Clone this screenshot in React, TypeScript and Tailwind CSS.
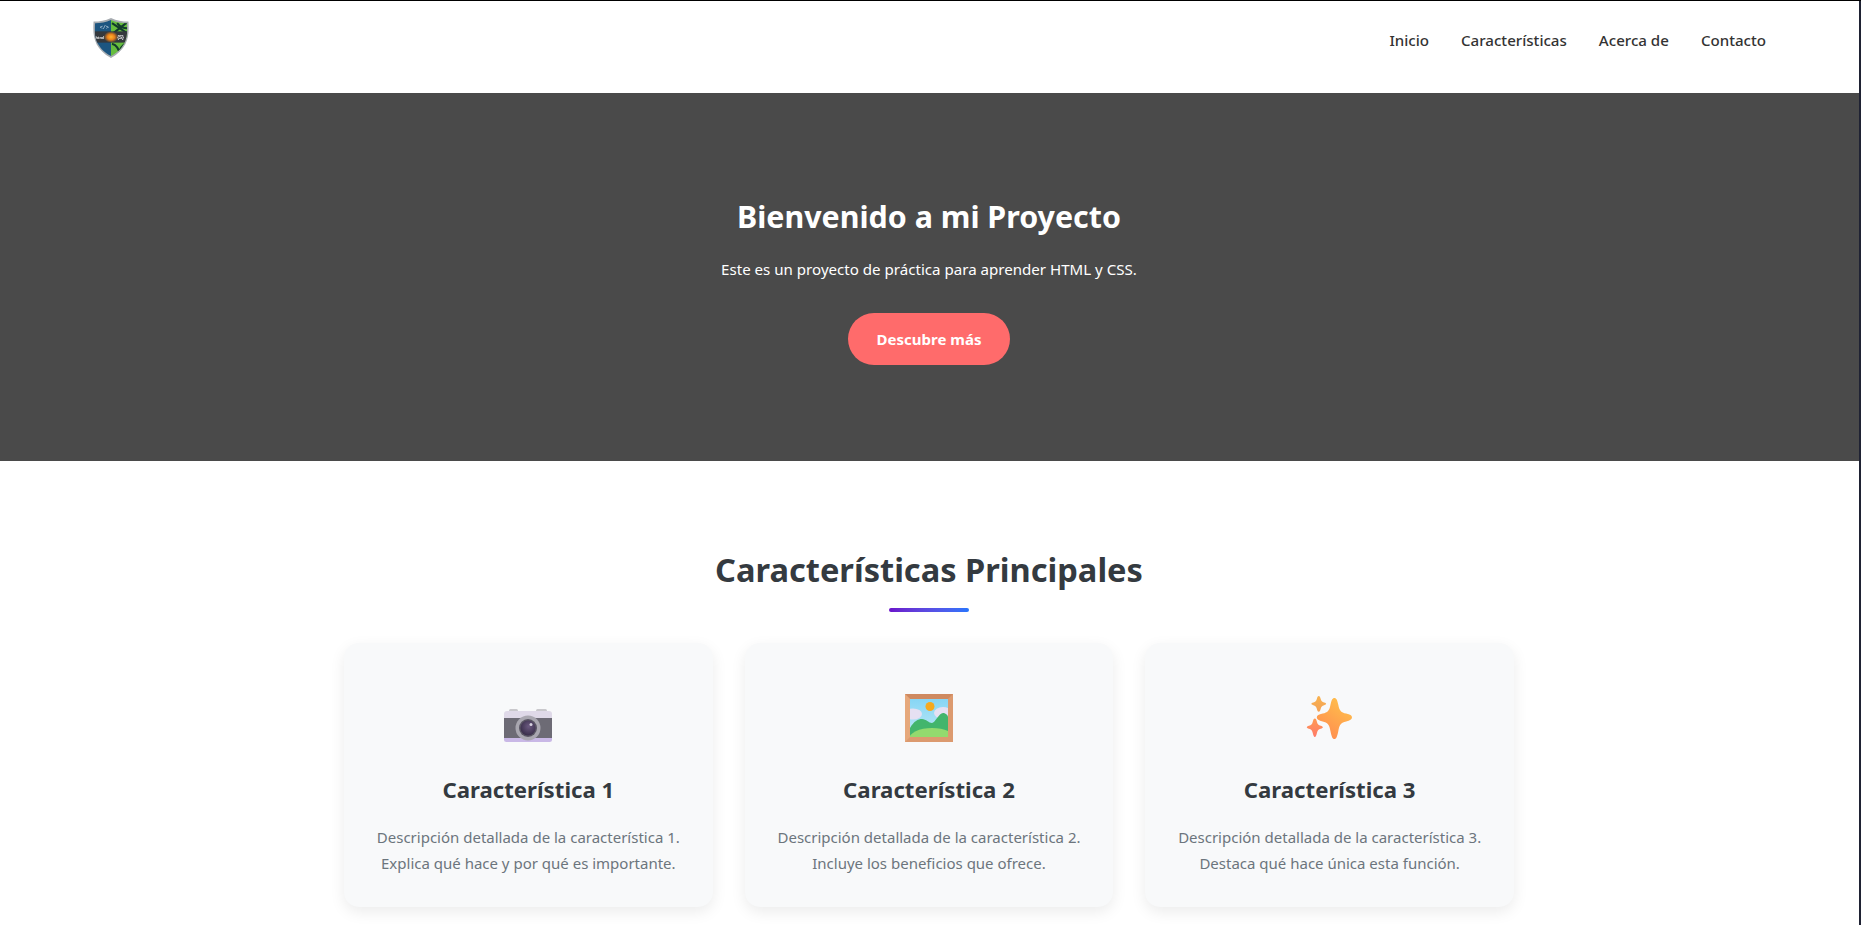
const font = "font-['Noto_Sans','Liberation_Sans',sans-serif]";

const CameraIcon = () => (
  <svg width="48" height="33" viewBox="0 0 48 33" className="block">
    <defs>
      <radialGradient id="lens" cx="0.55" cy="0.4" r="0.6">
        <stop offset="0" stopColor="#6b5a80" />
        <stop offset="1" stopColor="#3a2f4b" />
      </radialGradient>
    </defs>
    <rect x="5" y="0" width="9" height="4" rx="1.5" fill="#c9c8cc" />
    <rect x="32" y="0" width="11" height="4" rx="1.5" fill="#c9c8cc" />
    <path d="M3 2h42a3 3 0 0 1 3 3v6H0V5a3 3 0 0 1 3-3z" fill="#dfd9e8" />
    <rect x="0" y="9" width="48" height="21" fill="#6d6b75" />
    <path d="M0 29h48v1.500a2.500 2.500 0 0 1-2.500 2.500h-43A2.500 2.500 0 0 1 0 30.500z" fill="#c9b8e6" />
    <circle cx="24" cy="19" r="12.500" fill="#a9a7b0" />
    <circle cx="24" cy="19" r="9" fill="#5a5664" />
    <circle cx="24" cy="19" r="7.500" fill="url(#lens)" />
    <circle cx="27" cy="15.500" r="1.500" fill="#d8d4e0" />
  </svg>
);

const PictureIcon = () => (
  <svg width="48" height="48" viewBox="0 0 48 48" className="block">
    <defs>
      <linearGradient id="sky" x1="0" y1="0" x2="0" y2="1">
        <stop offset="0" stopColor="#86d6f5" />
        <stop offset="1" stopColor="#bfe8f5" />
      </linearGradient>
      <clipPath id="pic">
        <rect x="5" y="5" width="38" height="38" />
      </clipPath>
    </defs>
    <rect x="0" y="0" width="48" height="48" fill="#dc9a6f" />
    <path d="M0 0h48l-5 5H5z" fill="#cf8a60" />
    <path d="M0 0l5 5v38l-5 5z" fill="#e6a87b" />
    <g clipPath="url(#pic)">
      <rect x="5" y="5" width="38" height="38" fill="url(#sky)" />
      <ellipse cx="8" cy="20" rx="9" ry="5.500" fill="#e6e0f2" />
      <ellipse cx="38" cy="19" rx="9" ry="6" fill="#e6e0f2" />
      <circle cx="25" cy="12.500" r="4.500" fill="#f6a91f" />
      <path d="M5 34c4-7 8-9 12-9 4 0 7 4 10 4 3 0 7-10 11-10 2 0 5 2 5 4v20H5z" fill="#42b56c" />
      <ellipse cx="27" cy="45" rx="23" ry="11" fill="#93da6e" />
    </g>
  </svg>
);

const SparkleIcon = () => (
  <svg width="47" height="43" viewBox="0 0 48 44" className="block mb-[3px]">
    <defs>
      <linearGradient id="sp1" x1="0.8" y1="0" x2="0.2" y2="1">
        <stop offset="0" stopColor="#ffc24a" />
        <stop offset="1" stopColor="#ff8a50" />
      </linearGradient>
      <linearGradient id="sp2" x1="0.5" y1="0" x2="0.5" y2="1">
        <stop offset="0" stopColor="#f9b24e" />
        <stop offset="1" stopColor="#f3a257" />
      </linearGradient>
      <linearGradient id="sp3" x1="0.5" y1="0" x2="0.5" y2="1">
        <stop offset="0" stopColor="#ff9a52" />
        <stop offset="1" stopColor="#ff7a6a" />
      </linearGradient>
    </defs>
    <path d="M29 2c2 0 3 2 4 7 1 6 3 8 8 9 4 1 6 2 6 4s-2 3-6 4c-5 1-7 3-8 10-1 5-2 8-4 8s-3-3-4-8c-1-7-3-9-8-10-4-1-6-2-6-4s2-3 6-4c5-1 7-3 8-9 1-5 2-7 4-7z" fill="url(#sp1)" />
    <path d="M13 0c1 0 1.500 1 2 3 .4 2 1.500 3 3.500 3.600 1.500.4 2 .8 2 1.400s-.5 1-2 1.400c-2 .6-3.100 1.600-3.500 3.600-.5 2-1 3-2 3s-1.500-1-2-3c-.4-2-1.500-3-3.500-3.600C6 9 5.500 8.600 5.500 8s.5-1 2-1.400C9.500 6 10.600 5 11 3c.5-2 1-3 2-3z" fill="url(#sp2)" />
    <path d="M9 23c1 0 1.600 1.200 2.200 3.500.5 2.200 1.600 3.300 3.800 3.900 1.500.5 2.200 1 2.200 1.600s-.7 1.100-2.200 1.600c-2.200.6-3.300 1.700-3.800 3.900C10.600 40 10 42 9 42s-1.600-2-2.200-4.500C6.300 35.300 5.200 34.200 3 33.600 1.500 33.100.8 32.600.8 32s.7-1.100 2.200-1.600c2.200-.6 3.300-1.700 3.800-3.900C7.400 24.200 8 23 9 23z" fill="url(#sp3)" />
  </svg>
);

const Logo = () => (
  <svg width="38" height="40" viewBox="0 0 36 39" className="block blur-[0.3px]">
    <defs>
      <clipPath id="shield">
        <path d="M18 2C23 4.500 28 5 33.500 5c1 13-.5 23.500-15.500 32C3 28.500 1.500 18 2.500 5 8 5 13 4.500 18 2z" />
      </clipPath>
      <radialGradient id="flash" cx="0.5" cy="0.5" r="0.5">
        <stop offset="0" stopColor="#ffb52e" />
        <stop offset="0.5" stopColor="#e8801c" />
        <stop offset="1" stopColor="#e8801c" stopOpacity="0" />
      </radialGradient>
    </defs>
    <path d="M18 0c5.500 2.500 11 3.500 17 3.500C36 18 34.500 29.500 18 39 1.500 29.500 0 18 1 3.500 7 3.500 12.500 2.500 18 0z" fill="#a6abb0" />
    <g clipPath="url(#shield)">
      <rect x="0" y="0" width="18" height="39" fill="#1c5580" />
      <rect x="18" y="0" width="18" height="39" fill="#66bd3e" />
      <path d="M19 5l15 10M34 4L20 15M24 5c3 4 7 5 10 5M19 25c4 1 7 5 8 12M34 24c-5 2-8 6-9 13" stroke="#123b2c" strokeWidth="2" fill="none" />
      <rect x="2" y="13" width="32" height="11" fill="#34383d" />
      <text x="7" y="10.500" fontSize="5" fill="#e8eef4" fontFamily="Liberation Mono">&lt;/&gt;</text>
      <text x="3" y="20" fontSize="4" fontWeight="700" fill="#f2f2f2" fontFamily="Liberation Sans">html</text>
      <text x="24" y="20" fontSize="4.500" fontWeight="700" fill="#f2f2f2" fontFamily="Liberation Sans">{"{S}"}</text>
      <rect x="11" y="13" width="14" height="11" fill="url(#flash)" />
    </g>
  </svg>
);

const links = ["Inicio", "Características", "Acerca de", "Contacto"];

const features = [
  {
    icon: <CameraIcon />,
    title: "Característica 1",
    lines: ["Descripción detallada de la característica 1.", "Explica qué hace y por qué es importante."],
  },
  {
    icon: <PictureIcon />,
    title: "Característica 2",
    lines: ["Descripción detallada de la característica 2.", "Incluye los beneficios que ofrece."],
  },
  {
    icon: <SparkleIcon />,
    title: "Característica 3",
    lines: ["Descripción detallada de la característica 3.", "Destaca qué hace única esta función."],
  },
];

const App = () => {
  return (
    <div className={`h-[925px] overflow-hidden bg-[#1f2233] border-t border-black pr-0.5 ${font}`}>
      <div className="h-full bg-white">
        <header className="h-[92px] bg-white flex justify-between pl-[92px] pr-[93px]">
          <div className="pt-[17px]">
            <Logo />
          </div>
          <nav className="flex gap-8 pt-[29px]">
            {links.map((link) => (
              <a key={link} className="text-[15.1px] leading-[21px] font-medium text-[#333333]">
                {link}
              </a>
            ))}
          </nav>
        </header>

        <section className="h-[368px] bg-[#4a4a4a] flex flex-col items-center text-white pt-[102px] pr-px">
          <h1 className="text-[30.4px] leading-[44px] font-bold">Bienvenido a mi Proyecto</h1>
          <p className="mt-[19px] text-[15.1px] leading-[22px]">
            Este es un proyecto de práctica para aprender HTML y CSS.
          </p>
          <button className="mt-[33px] h-[52px] w-[162px] rounded-full bg-[#ff6b6b] text-[15px] font-bold text-white">
            Descubre más
          </button>
        </section>

        <section className="pt-[85px] pr-px flex flex-col items-center">
          <h2 className="text-[32.6px] leading-[48px] font-bold text-[#343a40]">Características Principales</h2>
          <div className="mt-[14px] h-[4px] w-[80px] rounded-full bg-gradient-to-r from-[#6a11cb] to-[#2575fc]" />
          <div className="mt-[31px] w-[1170px] grid grid-cols-3 gap-8">
            {features.map((f) => (
              <div
                key={f.title}
                className="h-[264px] rounded-[15px] bg-[#f8f9fa] shadow-[0_5px_15px_rgba(0,0,0,0.08)] flex flex-col items-center"
              >
                <div className="h-[48px] mt-[51px] flex items-end justify-center">{f.icon}</div>
                <h3 className="mt-[33px] text-[22.2px] leading-[30px] font-bold text-[#343a40]">{f.title}</h3>
                <p className="mt-[19px] text-center text-[15px] leading-[26px] text-[#6c757d]">
                  {f.lines[0]}
                  <br />
                  {f.lines[1]}
                </p>
              </div>
            ))}
          </div>
        </section>
      </div>
    </div>
  );
};

export default App;
